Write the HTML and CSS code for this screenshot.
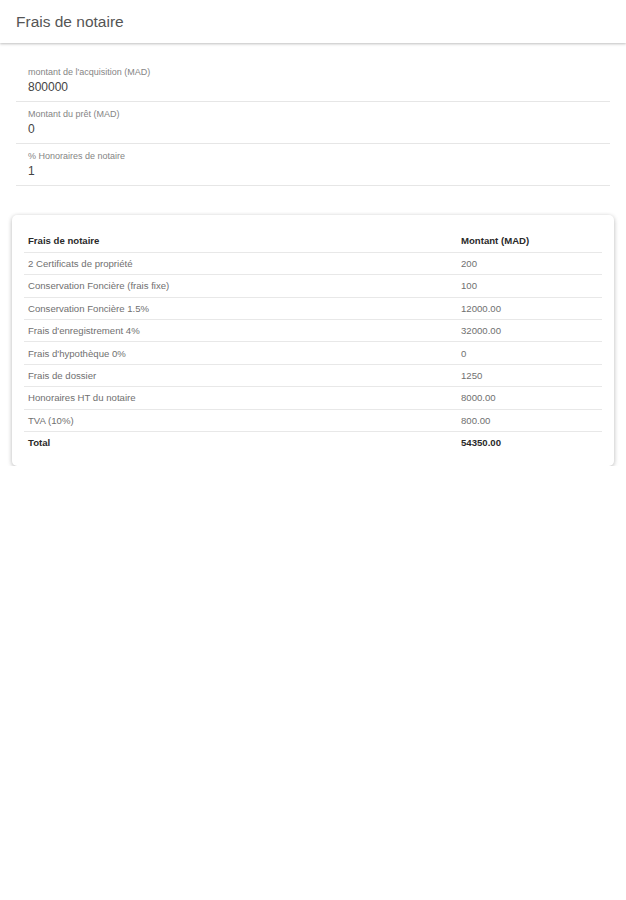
FILE: index.html
```html
<!DOCTYPE html>
<html lang="fr">
<head>
<meta charset="utf-8">
<title>Frais de notaire</title>
<link rel="stylesheet" href="styles.css">
</head>
<body>
<header class="toolbar">
  <h1 class="toolbar-title">Frais de notaire</h1>
</header>
<main class="content">
  <section class="form">
    <div class="field">
      <div class="field-label">montant de l'acquisition (MAD)</div>
      <div class="field-value">800000</div>
    </div>
    <div class="field">
      <div class="field-label">Montant du prêt (MAD)</div>
      <div class="field-value">0</div>
    </div>
    <div class="field">
      <div class="field-label">% Honoraires de notaire</div>
      <div class="field-value">1</div>
    </div>
  </section>
  <section class="card">
    <table class="fees">
      <thead>
        <tr><th class="col-name">Frais de notaire</th><th>Montant (MAD)</th></tr>
      </thead>
      <tbody>
        <tr><td>2 Certificats de propriété</td><td>200</td></tr>
        <tr><td>Conservation Foncière (frais fixe)</td><td>100</td></tr>
        <tr><td>Conservation Foncière 1.5%</td><td>12000.00</td></tr>
        <tr><td>Frais d'enregistrement 4%</td><td>32000.00</td></tr>
        <tr><td>Frais d'hypothèque 0%</td><td>0</td></tr>
        <tr><td>Frais de dossier</td><td>1250</td></tr>
        <tr><td>Honoraires HT du notaire</td><td>8000.00</td></tr>
        <tr><td>TVA (10%)</td><td>800.00</td></tr>
        <tr class="total"><td>Total</td><td>54350.00</td></tr>
      </tbody>
    </table>
  </section>
</main>
</body>
</html>
```

FILE: styles.css
```css
* { box-sizing: border-box; }
html, body {
  margin: 0;
  padding: 0;
  background: #ffffff;
  font-family: "Liberation Sans", Arial, sans-serif;
}
.toolbar {
  height: 43px;
  display: flex;
  align-items: center;
  padding: 0 16px;
  background: #fff;
  box-shadow: 0 1px 2px rgba(0,0,0,0.18), 0 2px 3px rgba(0,0,0,0.06);
  position: relative;
}
.toolbar-title {
  margin: 0;
  font-size: 15.5px;
  font-weight: normal;
  color: #555;
}
.content {
  padding: 17px 0 0;
}
.form {
  padding: 0 16px;
}
.field {
  height: 42px;
  padding: 7px 12px 0;
  border-bottom: 1px solid #e6e6e6;
}
.field-label {
  font-size: 9px;
  line-height: 10px;
  color: #858585;
}
.field-value {
  font-size: 12px;
  line-height: 20px;
  color: #444;
}
.card {
  margin: 29px 12px 0;
  padding: 15px 12px 12px;
  background: #fff;
  border-radius: 5px;
  box-shadow: 0 1px 4px rgba(0,0,0,0.22), 0 2px 6px rgba(0,0,0,0.08);
}
.fees {
  width: 100%;
  border-collapse: collapse;
  font-size: 9.6px;
}
.fees th, .fees td {
  height: 22.4px;
  padding: 0 4px;
  text-align: left;
  vertical-align: middle;
}
.fees th {
  font-weight: bold;
  color: #2a2a2a;
  border-bottom: 1px solid #e8e8e8;
}
.fees .col-name { width: 433px; }
.fees td {
  color: #707070;
  border-bottom: 1px solid #e8e8e8;
}
.fees tr.total td {
  font-weight: bold;
  color: #2a2a2a;
  border-bottom: none;
}
```
